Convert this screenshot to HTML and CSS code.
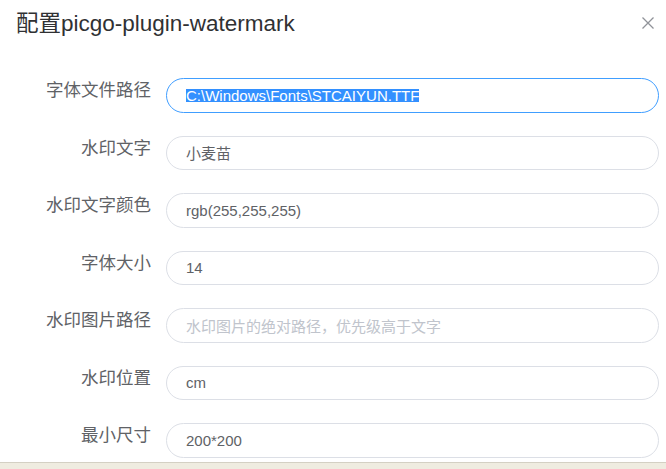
FILE: index.html
```html
<!DOCTYPE html>
<html lang="zh-CN">
<head>
<meta charset="utf-8">
<title>配置picgo-plugin-watermark</title>
<link rel="stylesheet" href="styles.css">
</head>
<body>
<div class="page">
  <div class="dialog">
    <div class="header">
      <span class="title">配置picgo-plugin-watermark</span>
      <button class="close" aria-label="close">
        <svg width="12" height="12" viewBox="0 0 12 12"><path d="M0.5 0.5 L11.5 11.5 M11.5 0.5 L0.5 11.5" stroke="#909399" stroke-width="1.3" fill="none"/></svg>
      </button>
    </div>
    <div class="form">
      <label class="label">字体文件路径</label>
      <div class="input focus"><span class="sel">C:\Windows\Fonts\STCAIYUN.TTF</span></div>
      <label class="label">水印文字</label>
      <div class="input">小麦苗</div>
      <label class="label">水印文字颜色</label>
      <div class="input">rgb(255,255,255)</div>
      <label class="label">字体大小</label>
      <div class="input">14</div>
      <label class="label">水印图片路径</label>
      <div class="input placeholder">水印图片的绝对路径，优先级高于文字</div>
      <label class="label">水印位置</label>
      <div class="input">cm</div>
      <label class="label">最小尺寸</label>
      <div class="input">200*200</div>
    </div>
  </div>
  <div class="backdrop"></div>
</div>
</body>
</html>
```
FILE: styles.css
```css
html, body {
  margin: 0;
  padding: 0;
  background: #ffffff;
}
body {
  font-family: "Liberation Sans", "Noto Sans CJK SC", sans-serif;
  color: #606266;
}
.page {
  width: 666px;
  height: 469px;
  display: flex;
  flex-direction: column;
  overflow: hidden;
}
.dialog {
  height: 463px;
  background: #ffffff;
  border-bottom: 1px solid #d4d0c3;
  box-sizing: border-box;
  overflow: hidden;
}
.backdrop {
  flex: 1;
  background: #efece0;
}
.header {
  display: flex;
  justify-content: space-between;
  align-items: flex-start;
  padding: 8px 12px 0 16px;
}
.title {
  font-size: 22.5px;
  line-height: 32px;
  color: #303133;
}
.close {
  border: 0;
  background: none;
  padding: 0;
  margin-top: 9px;
  width: 12px;
  height: 12px;
  display: flex;
}
.form {
  display: grid;
  grid-template-columns: 151px 493px;
  column-gap: 15px;
  row-gap: 23.05px;
  padding-top: 38px;
}
.label {
  text-align: right;
  font-size: 17.5px;
  line-height: 24px;
  color: #606266;
  white-space: nowrap;
}
.input {
  height: 34.5px;
  box-sizing: border-box;
  border: 1.2px solid #dcdfe6;
  border-radius: 18px;
  padding: 0 19px;
  font-size: 15px;
  color: #606266;
  display: flex;
  align-items: center;
  white-space: nowrap;
}
.input.focus {
  border-color: #409eff;
}
.input.placeholder {
  color: #c0c4cc;
}
.sel {
  background: #3390ff;
  color: #ffffff;
  line-height: 13.5px;
  display: inline-block;
}
```
